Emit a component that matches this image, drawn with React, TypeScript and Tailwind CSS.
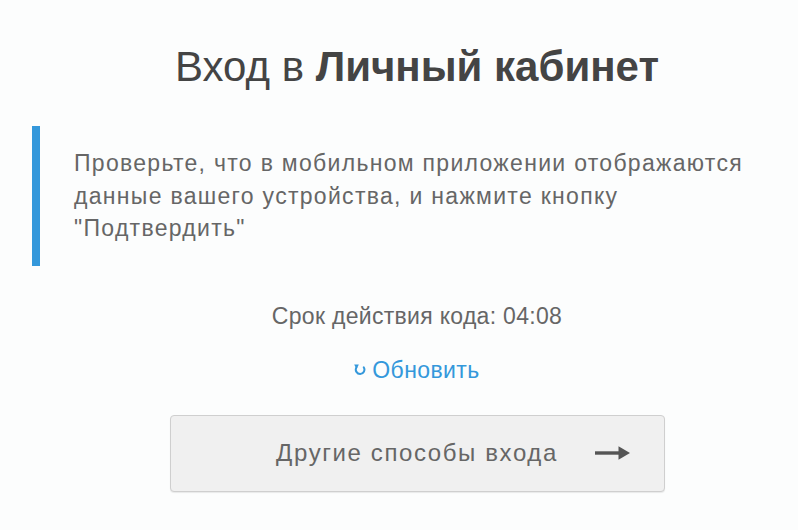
const FONT = "font-['Liberation_Sans',Arial,sans-serif]";

function RefreshIcon() {
  return (
    <svg width="12" height="14" viewBox="0 0 12 14" fill="none" aria-hidden="true" className="mt-[6px]">
      <path
        d="M2.3 5.6A4.3 4.3 0 1 0 9.8 5.4"
        stroke="#3498db"
        strokeWidth="2"
        strokeLinecap="round"
      />
      <path d="M0.2 2.6 4.8 2.6 2.6 7.2z" fill="#3498db" />
    </svg>
  );
}

function ArrowIcon() {
  return (
    <svg width="36" height="14" viewBox="0 0 36 14" aria-hidden="true">
      <rect x="0" y="5.3" width="26" height="3.4" fill="#555" />
      <path d="M23.5 0.3 35 7 23.5 13.7z" fill="#555" />
    </svg>
  );
}

export default function App(): JSX.Element {
  return (
    <div className={`min-h-[530px] w-full bg-[#fcfdfd] ${FONT}`}>
      <h1 className="pl-[36px] pt-[42px] text-center text-[42px] leading-[1.2] text-[#444]">
        <span className="font-light">Вход в </span>
        <span className="font-bold">Личный кабинет</span>
      </h1>

      <div className="mt-[34px] ml-[32px] mr-[32px] border-l-[8px] border-[#3498db] py-[21px] pl-[34px]">
        <p className="text-[23px] leading-[32.5px] tracking-[1.3px] text-[#666]">
          Проверьте, что в мобильном приложении отображаются данные вашего устройства, и нажмите
          кнопку "Подтвердить"
        </p>
      </div>

      <div className="flex flex-col items-center pl-[36px]">
        <p className="mt-[36px] text-[23px] leading-[28px] tracking-[0.3px] text-[#666]">
          Срок действия кода: 04:08
        </p>
        <button
          type="button"
          className="mt-[26px] flex items-start gap-[6px] text-[23px] leading-[28px] tracking-[0.4px] text-[#3498db]"
        >
          <RefreshIcon />
          Обновить
        </button>
        <button
          type="button"
          className="relative mt-[31px] h-[77px] w-[495px] rounded-[4px] border border-[#cfcfcf] bg-[#f0f0f0] text-[24px] tracking-[1.6px] text-[#666] shadow-[0_1px_1px_rgba(0,0,0,0.08)]"
        >
          Другие способы входа
          <span className="absolute right-[33px] top-1/2 -translate-y-1/2">
            <ArrowIcon />
          </span>
        </button>
      </div>
    </div>
  );
}
